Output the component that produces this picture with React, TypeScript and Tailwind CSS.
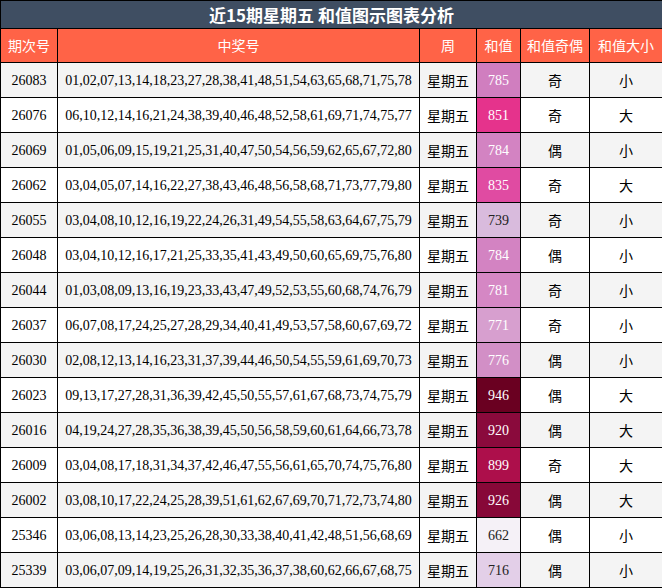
const rows: [string,string,string,string,string,string,boolean][] = [
["26083","01,02,07,13,14,18,23,27,28,38,41,48,51,54,63,65,68,71,75,78","785","#d07ebf","奇","小",true],
["26076","06,10,12,14,16,21,24,38,39,40,46,48,52,58,61,69,71,74,75,77","851","#e5338c","奇","大",true],
["26069","01,05,06,09,15,19,21,25,31,40,47,50,54,56,59,62,65,67,72,80","784","#d383c2","偶","小",true],
["26062","03,04,05,07,14,16,22,27,38,43,46,48,56,58,68,71,73,77,79,80","835","#e04ba2","奇","大",true],
["26055","03,04,08,10,12,16,19,22,24,26,31,49,54,55,58,63,64,67,75,79","739","#d9bbdd","奇","小",false],
["26048","03,04,10,12,16,17,21,25,33,35,41,43,49,50,60,65,69,75,76,80","784","#d383c2","偶","小",true],
["26044","01,03,08,09,13,16,19,23,33,43,47,49,52,53,55,60,68,74,76,79","781","#d587c4","奇","小",true],
["26037","06,07,08,17,24,25,27,28,29,34,40,41,49,53,57,58,60,67,69,72","771","#d79fcf","奇","小",true],
["26030","02,08,12,13,14,16,23,31,37,39,44,46,50,54,55,59,61,69,70,73","776","#d28fc6","偶","小",true],
["26023","09,13,17,27,28,31,36,39,42,45,50,55,57,61,67,68,73,74,75,79","946","#6a0021","偶","大",true],
["26016","04,19,24,27,28,35,36,38,39,45,50,56,58,59,60,61,64,66,73,78","920","#8a0a3c","偶","大",true],
["26009","03,04,08,17,18,31,34,37,42,46,47,55,56,61,65,70,74,75,76,80","899","#ad0f4b","奇","大",true],
["26002","03,08,10,17,22,24,25,28,39,51,61,62,67,69,70,71,72,73,74,80","926","#870838","偶","大",true],
["25346","03,06,08,13,14,23,25,26,28,30,33,38,40,41,42,48,51,56,68,69","662","#f5f1f7","偶","小",false],
["25339","03,06,07,09,14,19,25,26,31,32,35,36,37,38,60,62,66,67,68,75","716","#e3cfe8","偶","小",false],
];
const cjk = { fontFamily: '"Noto Sans CJK SC", sans-serif' };
const serif = { fontFamily: '"Liberation Serif", "Noto Sans CJK SC", serif' };
export default function App() {
  return (
    <div className="w-[662px] h-[588px] bg-white overflow-hidden">
      <table className="border-collapse w-[662px] table-fixed text-[14px] text-black">
        <colgroup>
          <col className="w-[57px]" /><col className="w-[362px]" /><col className="w-[57px]" />
          <col className="w-[44px]" /><col className="w-[69px]" /><col className="w-[73px]" />
        </colgroup>
        <thead>
          <tr className="h-[28px]">
            <th colSpan={6} className="bg-[#3f4e62] text-white text-[17px] font-bold border border-black p-0" style={cjk}>近15期星期五 和值图示图表分析</th>
          </tr>
          <tr className="h-[34px] bg-[#ff6347] text-white text-[14px] font-normal" style={cjk}>
            {["期次号","中奖号","周","和值","和值奇偶","和值大小"].map(h => <th key={h} className="border border-black font-normal p-0">{h}</th>)}
          </tr>
        </thead>
        <tbody>
          {rows.map((r, i) => (
            <tr key={r[0]} className={"h-[35px] " + (i % 2 === 0 ? "bg-[#f4f4f4]" : "bg-white")}>
              <td className="border border-black text-center p-0" style={serif}>{r[0]}</td>
              <td className="border border-black text-center p-0 text-[14px] whitespace-nowrap" style={serif}>{r[1]}</td>
              <td className="border border-black text-center p-0" style={cjk}>星期五</td>
              <td className={"border border-black text-center p-0 " + (r[6] ? "text-white" : "text-[#222]")} style={{ ...serif, backgroundColor: r[3] }}>{r[2]}</td>
              <td className="border border-black text-center p-0" style={cjk}>{r[4]}</td>
              <td className="border border-black text-center p-0" style={cjk}>{r[5]}</td>
            </tr>
          ))}
        </tbody>
      </table>
    </div>
  );
}
